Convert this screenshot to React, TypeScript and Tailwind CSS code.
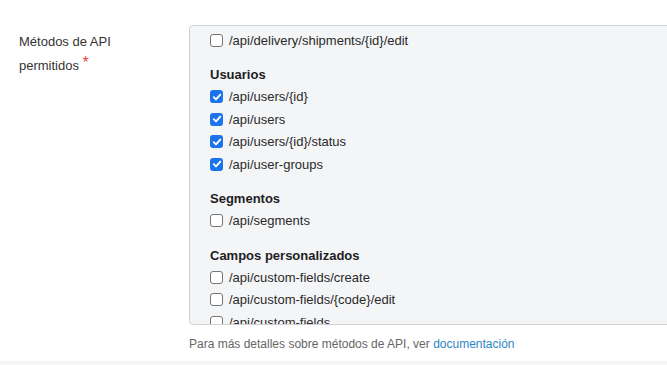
import React from "react";

type Group = { title?: string; items: { path: string; checked: boolean }[] };

const groups: Group[] = [
  { items: [{ path: "/api/delivery/shipments/{id}/edit", checked: false }] },
  {
    title: "Usuarios",
    items: [
      { path: "/api/users/{id}", checked: true },
      { path: "/api/users", checked: true },
      { path: "/api/users/{id}/status", checked: true },
      { path: "/api/user-groups", checked: true },
    ],
  },
  { title: "Segmentos", items: [{ path: "/api/segments", checked: false }] },
  {
    title: "Campos personalizados",
    items: [
      { path: "/api/custom-fields/create", checked: false },
      { path: "/api/custom-fields/{code}/edit", checked: false },
      { path: "/api/custom-fields", checked: false },
      { path: "/api/custom-fields/{code}", checked: false },
    ],
  },
];

function Box({ checked }: { checked: boolean }) {
  if (checked) {
    return (
      <span className="flex h-[13px] w-[13px] shrink-0 items-center justify-center rounded-[3px] bg-[#1b74ec]">
        <svg width="10" height="10" viewBox="0 0 10 10" fill="none">
          <path d="M1.8 5.2 L4 7.4 L8.3 2.6" stroke="white" strokeWidth="1.9" strokeLinecap="round" strokeLinejoin="round" />
        </svg>
      </span>
    );
  }
  return <span className="h-[13px] w-[13px] shrink-0 rounded-[3px] border border-[#767676] bg-white" />;
}

export default function App() {
  return (
    <div className="relative h-[365px] w-[667px] overflow-hidden bg-white font-['Liberation_Sans',Arial,sans-serif] text-[13px] text-[#222]">
      <div className="flex pt-[25px]">
        <div className="w-[189px] shrink-0 pl-[19px] pt-[5px] leading-[23px] text-[#333]">
          Métodos de API
          <br />
          permitidos <span className="relative -top-[2px] text-[16px] text-[#e5484d]">*</span>
        </div>
        <div className="flex-1">
          <div className="-mr-2 h-[300px] overflow-hidden rounded-tl-[4px] rounded-bl-[4px] border border-[#cfd1d5] bg-[#f4f5f7] pl-[20px] pt-[3px]">
            {groups.map((g, gi) => (
              <div key={gi} className={gi > 0 ? "mt-[13px]" : ""}>
                {g.title && (
                  <div className="flex h-[21px] items-center font-bold text-[#1d1d1f]">{g.title}</div>
                )}
                {g.items.map((it) => (
                  <div key={it.path} className="flex h-[22.5px] items-center gap-[6px] text-[#2a2a2a]">
                    <Box checked={it.checked} />
                    <span>{it.path}</span>
                  </div>
                ))}
              </div>
            ))}
          </div>
          <div className="mt-[10px] text-[12px] text-[#666]">
            Para más detalles sobre métodos de API, ver <a className="text-[#2b87c3]">documentación</a>
          </div>
        </div>
      </div>
      <div className="absolute bottom-0 left-0 right-0 h-[4px] bg-[#f6f6f7]" />
    </div>
  );
}
